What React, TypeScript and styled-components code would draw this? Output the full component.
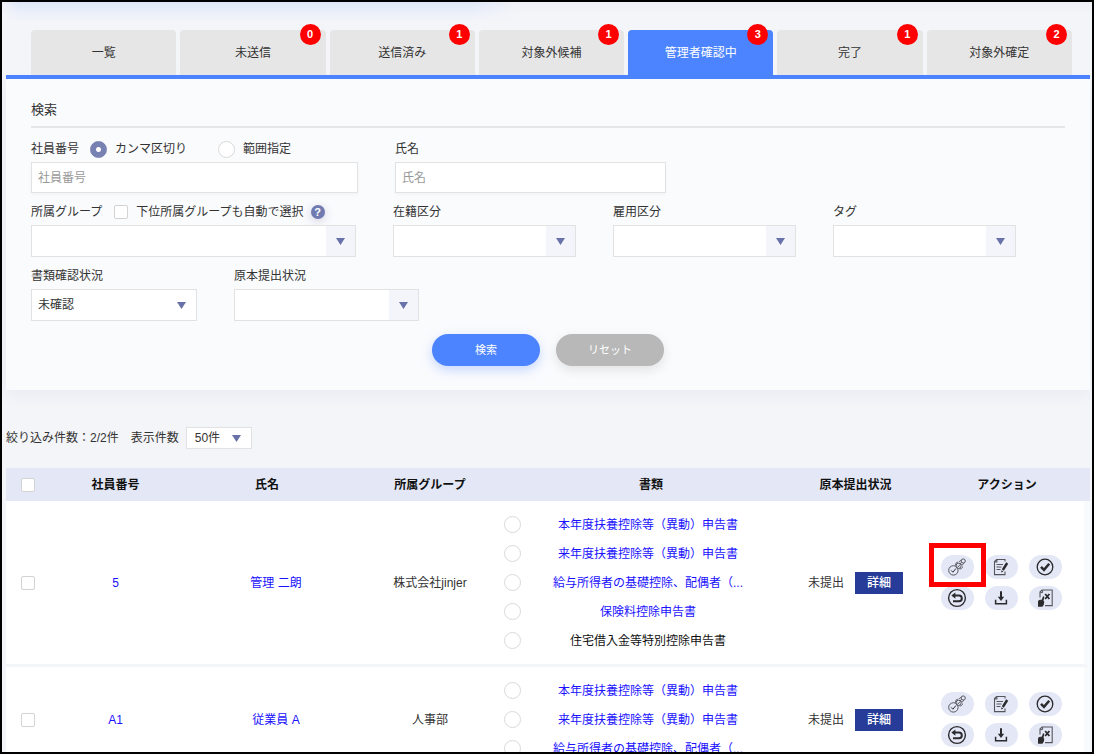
import React, { useState } from 'react';
import styled, { createGlobalStyle, css } from 'styled-components';

const GlobalStyle = createGlobalStyle`
  *, *::before, *::after { box-sizing: border-box; }
  body {
    margin: 0;
    background: #f4f5f9;
    color: #333;
    font: 12px/18px "Liberation Sans", "Noto Sans CJK JP", sans-serif;
  }
  button, input, select { font: inherit; color: inherit; margin: 0; }
  button { cursor: pointer; }
`;

const Frame = styled.div`
  height: 100vh;
  overflow: hidden;
  border: 2px solid #000;
  padding: 0 2px 0 4px;
  background: #f4f5f9;
`;

const HeaderShade = styled.div`
  height: 20px;
  margin: 0 -2px 0 -4px;
  background: linear-gradient(#eff0f5, #f4f5f9 60%);
  &::before {
    content: '';
    display: block;
    width: 47%;
    height: 20px;
    background: linear-gradient(#dfe7f7, #ebeffa 50%, #f4f5f9);
    mask-image: linear-gradient(to right, transparent, #000 16px calc(100% - 40px), transparent);
  }
`;

const Tabs = styled.nav`
  display: flex;
  gap: 4px;
  padding: 8px 18px 0 25px;
  border-bottom: 4px solid #4c84ff;
`;

const Tab = styled.button<{ $active?: boolean }>`
  position: relative;
  flex: 1;
  height: 45px;
  padding: 0;
  border: 0;
  border-radius: 4px 4px 0 0;
  background: ${(p) => (p.$active ? '#4c84ff' : '#e6e6e6')};
  color: ${(p) => (p.$active ? '#fff' : '#333')};
`;

const Badge = styled.span`
  position: absolute;
  top: -6px;
  right: 5px;
  width: 21px;
  height: 21px;
  border-radius: 50%;
  background: #f00;
  color: #fff;
  font-size: 11px;
  font-weight: 700;
  line-height: 21px;
`;

const Panel = styled.form`
  padding: 21px 25px 24px;
  background: #fafbfd;
  box-shadow: 0 4px 16px rgba(60, 70, 130, 0.06);
`;

const PanelTitle = styled.h2`
  margin: 0 0 9px;
  padding-bottom: 6px;
  border-bottom: 2px solid #e5e6e8;
  font-size: 13px;
  font-weight: 400;
  line-height: 20px;
`;

const FieldRow = styled.div`
  display: flex;
  gap: 37px;
  margin-bottom: 7px;
`;

const Field = styled.div<{ $width: number }>`
  display: flex;
  flex-direction: column;
  gap: 1px;
  width: ${(p) => p.$width}px;
`;

const LabelLine = styled.div`
  display: flex;
  align-items: center;
  height: 24px;
  white-space: nowrap;
`;

const Choice = styled.label<{ $gap: number }>`
  display: flex;
  align-items: center;
  gap: 8px;
  margin-left: ${(p) => p.$gap}px;
`;

const TextInput = styled.input`
  width: 100%;
  height: 31px;
  padding: 0 6px;
  border: 1px solid #e2e2e2;
  background: #fff;
  box-shadow: 0 2px 4px rgba(0, 0, 0, 0.03);
  &::placeholder { color: #999; }
`;

const Radio = styled.input.attrs({ type: 'radio' })`
  appearance: none;
  flex: none;
  width: 17px;
  height: 17px;
  border: 1px solid #d9d9d9;
  border-radius: 50%;
  background: #fff;
  &:checked {
    border-color: #7781b2;
    background: radial-gradient(circle, #fff 0 2px, #7781b2 3px);
  }
`;

const Checkbox = styled.input.attrs({ type: 'checkbox' })`
  appearance: none;
  display: block;
  flex: none;
  width: 14px;
  height: 14px;
  border: 1px solid #d3d3d3;
  border-radius: 2px;
  background: #fff;
  &:checked { background: #7781b2; }
`;

const HelpButton = styled.button`
  width: 14px;
  height: 14px;
  margin-left: 7px;
  padding: 0;
  border: 0;
  border-radius: 50%;
  background: #6f7ab0;
  box-shadow: 0 2px 10px rgba(80, 70, 130, 0.25);
  color: #fff;
  font-size: 11px;
  font-weight: 700;
  line-height: 14px;
`;

const SelectShell = styled.div<{ $compact?: boolean }>`
  display: grid;
  height: ${(p) => (p.$compact ? 22 : 32)}px;
  width: ${(p) => (p.$compact ? '66px' : '100%')};
  > * { grid-area: 1 / 1; }
`;

const SelectBox = styled.select<{ $compact?: boolean }>`
  appearance: none;
  width: 100%;
  padding: 0 6px;
  border: 1px solid #e2e2e2;
  border-radius: 0;
  background: #fff;
  ${(p) => p.$compact && css`padding: 0 8px;`}
`;

const Arrow = styled.span<{ $tinted?: boolean }>`
  display: grid;
  place-items: center;
  justify-self: end;
  width: 29px;
  margin: 1px;
  background: ${(p) => (p.$tinted ? '#f4f5fa' : 'transparent')};
  pointer-events: none;
`;

const Buttons = styled.div`
  display: flex;
  justify-content: center;
  gap: 16px;
  margin-top: 13px;
`;

const PillButton = styled.button<{ $primary?: boolean }>`
  width: 108px;
  height: 32px;
  border: 0;
  border-radius: 16px;
  background: ${(p) => (p.$primary ? '#4c84ff' : '#b8b8b8')};
  box-shadow: 0 4px 12px ${(p) => (p.$primary ? 'rgba(76, 132, 255, 0.3)' : 'rgba(0, 0, 0, 0.1)')};
  color: #fff;
  font-size: 11px;
`;

const ListBar = styled.div`
  display: flex;
  align-items: center;
  margin: 37px 0 19px;
`;

const PageSize = styled.label`
  display: flex;
  align-items: center;
  gap: 7px;
  margin-left: 12px;
`;

const Grid = styled.table`
  width: 100%;
  table-layout: fixed;
  border-collapse: separate;
  border-spacing: 0;
  text-align: center;
`;

const Th = styled.th<{ $pr?: number }>`
  height: 33px;
  padding: 0 ${(p) => p.$pr ?? 0}px 0 0;
  background: #e4e8f6;
  color: #111;
  font-weight: 700;
`;

const Td = styled.td<{ $pr?: number }>`
  padding: 9px ${(p) => p.$pr ?? 0}px 9px 0;
  border-bottom: 3px solid #f4f5f9;
  background: #fff;
  vertical-align: middle;
  &:last-child { border-right: 6px solid #f9fafc; }
`;

const CheckCell = styled.div`
  display: flex;
  justify-content: center;
`;

const Link = styled.a`
  color: #1a12ff;
  text-decoration: none;
`;

const DocLine = styled.div`
  display: flex;
  align-items: center;
  justify-content: center;
  height: 29px;
  color: #111;
  white-space: nowrap;
`;

const Submission = styled.div`
  display: flex;
  align-items: center;
  justify-content: center;
  gap: 11px;
`;

const DetailButton = styled.button`
  width: 48px;
  height: 22px;
  padding: 0;
  border: 0;
  background: #273b98;
  color: #fff;
  font-weight: 500;
`;

const Actions = styled.div`
  display: grid;
  grid-template-columns: repeat(3, 33px);
  justify-content: center;
  gap: 7px 11px;
`;

const ActionButton = styled.button<{ $marked?: boolean }>`
  position: relative;
  display: grid;
  place-items: center;
  height: 24px;
  padding: 0;
  border: 0;
  border-radius: 12px;
  background: #e4e8f6;
  color: #2b2b2e;
  ${(p) =>
    p.$marked &&
    css`
      z-index: 1;
      &::after {
        content: '';
        position: absolute;
        inset: -12px -12px -8px -12px;
        border: 5px solid #f00;
      }
    `}
`;

const icons: Record<string, React.ReactNode> = {
  '承認フロー': (
    <g strokeWidth="1" stroke="#55565c">
      <circle cx="6.4" cy="13.4" r="4.7" />
      <path d="M4.1 13.4l1.8 1.8 3-3.7" stroke="#2b2b2e" />
      <circle cx="11.6" cy="8.8" r="2.6" />
      <path d="M10.5 8.8l.9.9 1.5-2" />
      <path d="M8.6 8.4c-.4-1.6.6-3 2.2-3.2M12.4 11.8c1.6.4 3-.6 3.2-2.2" />
      <circle cx="16.2" cy="4" r="2.1" />
      <path d="M12.2 5.2c.2-1.2 1-1.8 1.9-1.6M14.2 7.6c1.2.4 2.2 0 2.4-1.3M13 6.8l1.6-1.4" />
    </g>
  ),
  '編集': (
    <g strokeWidth="1.1">
      <path d="M14 4.5V2.5H5.6L3.5 4.6v13H14V14.5M3.6 5h2.3V2.6" stroke="#55565c" />
      <path d="M5.5 7.5h6.5M5.5 10h5M5.5 12.5h4" stroke="#55565c" />
      <path d="M16.2 6l-4.4 7" strokeWidth="2.4" />
      <path d="M10.2 15.6l.3-2.4 1.9 1.2z" fill="currentColor" stroke="none" />
    </g>
  ),
  '確認': (
    <g>
      <circle cx="10" cy="10" r="7.8" strokeWidth="1.3" />
      <path d="M6 9.8l3 3 5.2-6" strokeWidth="2.5" />
    </g>
  ),
  '差戻し': (
    <g>
      <circle cx="10" cy="10" r="8.4" strokeWidth="1.4" />
      <path d="M6.8 7.6h5.2a2.8 2.8 0 0 1 0 5.6H6" strokeWidth="2" />
      <path d="M8.4 4.4L4.3 7.6l4.1 3.2z" fill="currentColor" stroke="none" />
    </g>
  ),
  'ダウンロード': (
    <g>
      <path d="M10 3.3v7" strokeWidth="2" />
      <path d="M6.8 8.8h6.4L10 13z" fill="currentColor" stroke="none" />
      <path d="M4.6 11.8v4h10.8v-4" strokeWidth="1.5" />
    </g>
  ),
  '取消': (
    <g>
      <path d="M5 9.5V4l2-2h10.2v15.6H10" strokeWidth="1.1" stroke="#55565c" />
      <path d="M5.2 4.6h2.4V2.2" strokeWidth="1" stroke="#55565c" />
      <path d="M10.2 6l4.2 5M14.4 6l-4.2 5" strokeWidth="1.8" />
      <path
        d="M3 18.8v-5.2l1-1.8 1.2.5.4-.9 1.2.3 1.2-3.4 1.4.4-.9 4.3.8.8-.5 3-1.4 2z"
        fill="currentColor"
        stroke="none"
      />
    </g>
  ),
};

function ActionIcon({ name }: { name: string }) {
  return (
    <svg width="20" height="20" viewBox="0 0 20 20" fill="none" stroke="currentColor" aria-hidden="true">
      {icons[name]}
    </svg>
  );
}

interface DropDownProps {
  id?: string;
  label?: string;
  options?: string[];
  tinted?: boolean;
  compact?: boolean;
}

function DropDown({ id, label, options = [''], tinted, compact }: DropDownProps) {
  return (
    <SelectShell $compact={compact}>
      <SelectBox id={id} aria-label={label} $compact={compact}>
        {options.map((o) => (
          <option key={o}>{o}</option>
        ))}
      </SelectBox>
      <Arrow $tinted={tinted}>
        <svg width="9" height="7" viewBox="0 0 9 7" aria-hidden="true">
          <path d="M0 0h9L4.5 7z" fill="#6872a8" />
        </svg>
      </Arrow>
    </SelectShell>
  );
}

function SelectField({ id, label, width, options }: { id: string; label: string; width: number; options?: string[] }) {
  return (
    <Field $width={width}>
      <LabelLine>
        <label htmlFor={id}>{label}</label>
      </LabelLine>
      <DropDown id={id} options={options} tinted={!options} />
    </Field>
  );
}

const tabs: { label: string; count?: number }[] = [
  { label: '一覧' },
  { label: '未送信', count: 0 },
  { label: '送信済み', count: 1 },
  { label: '対象外候補', count: 1 },
  { label: '管理者確認中', count: 3 },
  { label: '完了', count: 1 },
  { label: '対象外確定', count: 2 },
];

const documents = [
  '本年度扶養控除等（異動）申告書',
  '来年度扶養控除等（異動）申告書',
  '給与所得者の基礎控除、配偶者（...',
  '保険料控除申告書',
  '住宅借入金等特別控除申告書',
];

const employees = [
  { no: '5', name: '管理 二朗', group: '株式会社jinjer', docs: documents, marked: true },
  { no: 'A1', name: '従業員 A', group: '人事部', docs: documents.slice(0, 3), marked: false },
];

const columnWidths = [44, 131, 190, 118, 46, 236, 169, 150];

export default function App() {
  const [active, setActive] = useState(4);
  return (
    <Frame>
      <GlobalStyle />
      <HeaderShade />
      <Tabs>
        {tabs.map((t, i) => (
          <Tab key={t.label} type="button" $active={i === active} onClick={() => setActive(i)}>
            {t.label}
            {t.count !== undefined && <Badge>{t.count}</Badge>}
          </Tab>
        ))}
      </Tabs>
      <Panel onSubmit={(e) => e.preventDefault()}>
        <PanelTitle>検索</PanelTitle>
        <FieldRow>
          <Field $width={327}>
            <LabelLine>
              <label htmlFor="employee-no">社員番号</label>
              <Choice $gap={11}>
                <Radio name="no-mode" defaultChecked />
                カンマ区切り
              </Choice>
              <Choice $gap={31}>
                <Radio name="no-mode" />
                範囲指定
              </Choice>
            </LabelLine>
            <TextInput id="employee-no" type="text" placeholder="社員番号" />
          </Field>
          <Field $width={271}>
            <LabelLine>
              <label htmlFor="employee-name">氏名</label>
            </LabelLine>
            <TextInput id="employee-name" type="text" placeholder="氏名" />
          </Field>
        </FieldRow>
        <FieldRow>
          <Field $width={325}>
            <LabelLine>
              <label htmlFor="group">所属グループ</label>
              <Choice $gap={12}>
                <Checkbox />
                下位所属グループも自動で選択
              </Choice>
              <HelpButton type="button">?</HelpButton>
            </LabelLine>
            <DropDown id="group" tinted />
          </Field>
          <SelectField id="enrolment" label="在籍区分" width={183} />
          <SelectField id="employment" label="雇用区分" width={183} />
          <SelectField id="tag" label="タグ" width={183} />
        </FieldRow>
        <FieldRow>
          <SelectField id="doc-status" label="書類確認状況" width={166} options={['未確認', '確認済み']} />
          <SelectField id="original-status" label="原本提出状況" width={185} />
        </FieldRow>
        <Buttons>
          <PillButton type="submit" $primary>
            検索
          </PillButton>
          <PillButton type="reset">リセット</PillButton>
        </Buttons>
      </Panel>
      <ListBar>
        絞り込み件数：2/2件
        <PageSize>
          表示件数
          <DropDown compact options={['50件', '100件']} />
        </PageSize>
      </ListBar>
      <Grid>
        <colgroup>
          {columnWidths.map((w, i) => (
            <col key={i} width={w} />
          ))}
        </colgroup>
        <thead>
          <tr>
            <Th>
              <CheckCell>
                <Checkbox aria-label="すべて選択" />
              </CheckCell>
            </Th>
            <Th>社員番号</Th>
            <Th $pr={18}>氏名</Th>
            <Th>所属グループ</Th>
            <Th />
            <Th $pr={4}>書類</Th>
            <Th>原本提出状況</Th>
            <Th $pr={16}>アクション</Th>
          </tr>
        </thead>
        <tbody>
          {employees.map((e) => (
            <tr key={e.no}>
              <Td>
                <CheckCell>
                  <Checkbox aria-label={e.name} />
                </CheckCell>
              </Td>
              <Td>
                <Link href="#employee">{e.no}</Link>
              </Td>
              <Td>
                <Link href="#employee">{e.name}</Link>
              </Td>
              <Td>{e.group}</Td>
              <Td>
                {e.docs.map((d) => (
                  <DocLine key={d}>
                    <Radio name={`doc-${e.no}`} aria-label={d} />
                  </DocLine>
                ))}
              </Td>
              <Td $pr={10}>
                {e.docs.map((d, i) => (
                  <DocLine key={d}>{i < 4 ? <Link href="#document">{d}</Link> : d}</DocLine>
                ))}
              </Td>
              <Td>
                <Submission>
                  未提出
                  <DetailButton type="button">詳細</DetailButton>
                </Submission>
              </Td>
              <Td $pr={22}>
                <Actions>
                  {Object.keys(icons).map((name, i) => (
                    <ActionButton key={name} type="button" aria-label={name} $marked={e.marked && i === 0}>
                      <ActionIcon name={name} />
                    </ActionButton>
                  ))}
                </Actions>
              </Td>
            </tr>
          ))}
        </tbody>
      </Grid>
    </Frame>
  );
}
